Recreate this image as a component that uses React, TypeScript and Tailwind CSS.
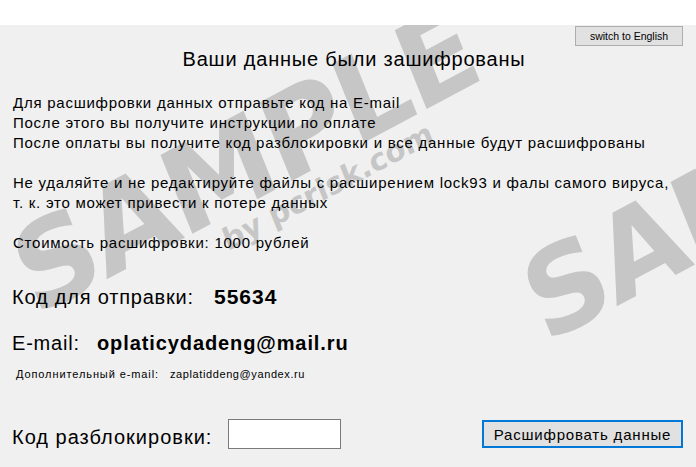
import { useState } from 'react';

const lines = [
  'Для расшифровки данных отправьте код на E-mail',
  'После этого вы получите инструкции по оплате',
  'После оплаты вы получите код разблокировки и все данные будут расшифрованы',
  '',
  'Не удаляйте и не редактируйте файлы с расширением lock93 и фалы самого вируса,',
  'т. к. это может привести к потере данных',
  '',
  'Стоимость расшифровки: 1000 рублей',
];

// grey "SAMPLE" stamp lying over the window
const Stamp = ({ className }: { className: string }) => (
  <div
    className={`absolute origin-bottom-left -rotate-[28deg] pointer-events-none select-none whitespace-nowrap text-[#c6c6c6] font-['DejaVu_Sans',sans-serif] font-bold leading-none -skew-x-6 ${className}`}
  >
    SAMPLE
  </div>
);

const App = () => {
  const [code, setCode] = useState('');

  return (
    <div className="relative w-[696px] h-[467px] overflow-hidden bg-[#f0f0f0] font-['Liberation_Sans',Arial,sans-serif] text-black">
      <Stamp className="left-[42px] top-[218px] text-[116px] tracking-[-3px]" />
      <Stamp className="left-[552px] top-[245px] text-[116px] tracking-[-3px]" />
      <div className="absolute left-[230px] top-[226px] origin-bottom-left -rotate-[28deg] -skew-x-6 pointer-events-none select-none whitespace-nowrap text-[#c6c6c6] font-['DejaVu_Sans',sans-serif] font-bold text-[30px] leading-none">
        by pcrisk.com
      </div>

      <div className="relative flex flex-col">
        <div className="h-[25px] bg-white" />

        <div className="flex justify-end pr-[13px] mt-[1px]">
          <button className="w-[108px] h-[20px] bg-[#e1e1e1] border border-[#adadad] text-[10.5px] leading-none">
            switch to English
          </button>
        </div>

        <h1 className="mt-[1px] pl-[12px] text-center text-[20px] tracking-[0.8px] leading-[24px]">
          Ваши данные были зашифрованы
        </h1>

        <div className="mt-[22px] pl-[13px] text-[15px] tracking-[0.75px] leading-[20px]">
          {lines.map((l, i) => (
            <div key={i} className="h-[20px] whitespace-nowrap">{l}</div>
          ))}
        </div>

        <div className="mt-[32px] pl-[12px] flex text-[20px] leading-[24px]">
          <span className="w-[202px] tracking-[0.8px]">Код для отправки:</span>
          <span className="font-bold text-[21px] tracking-[1px]">55634</span>
        </div>

        <div className="mt-[22px] pl-[12px] flex text-[20px] leading-[24px]">
          <span className="w-[85px] tracking-[0.8px]">E-mail:</span>
          <span className="font-bold tracking-[0.9px]">oplaticydadeng@mail.ru</span>
        </div>

        <div className="mt-[12px] pl-[16px] flex text-[11px] leading-[14px]">
          <span className="w-[154px] tracking-[0.9px]">Дополнительный e-mail:</span>
          <span className="tracking-[0.6px]">zaplatiddeng@yandex.ru</span>
        </div>

        <div className="mt-[38px] pl-[12px] pr-[13px] flex items-center">
          <span className="w-[216px] text-[20px] tracking-[1px] leading-[24px] mt-[6px]">Код разблокировки:</span>
          <input
            value={code}
            onChange={(e) => setCode(e.target.value)}
            className="w-[113px] h-[30px] bg-white border border-[#7a7a7a] outline-none px-1 text-[14px]"
          />
          <button className="ml-auto w-[201px] h-[28px] bg-[#e1e1e1] border-2 border-[#0078d7] text-[15px] tracking-[0.8px] leading-none">
            Расшифровать данные
          </button>
        </div>
      </div>
    </div>
  );
};

export default App;
